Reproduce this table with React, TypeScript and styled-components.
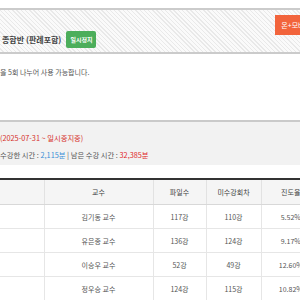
import styled, { createGlobalStyle } from "styled-components";

const GlobalStyle = createGlobalStyle`
  html, body {
    margin: 0;
    padding: 0;
    background: #ffffff;
    overflow: hidden;
  }
  body {
    font-family: "Noto Sans CJK KR", "Noto Sans", sans-serif;
    color: #555;
  }
`;

const rows = [
    { name: "김기동 교수", files: "117강", left: "110강", rate: "5.52%" },
    { name: "유은종 교수", files: "136강", left: "124강", rate: "9.17%" },
    { name: "이승우 교수", files: "52강", left: "49강", rate: "12.60%" },
    { name: "정우승 교수", files: "124강", left: "115강", rate: "10.82%" },
];

const App = () => {
    return (
        <Page>
            <GlobalStyle />
            <CourseHeader>
                <TitleGroup>
                    <Title>종합반 (판례포함)</Title>
                    <Badge>일시정지</Badge>
                </TitleGroup>
                <DeviceButton>온+모바일</DeviceButton>
            </CourseHeader>

            <Notice>을 5회 나누어 사용 가능합니다.</Notice>

            <StatusBox>
                <DateLine>(2025-07-31 ~ 일시중지중)</DateLine>
                <TimeLine>
                    수강한 시간 : <Blue>2,115분</Blue> | 남은 수강 시간 : <Red>32,385분</Red>
                </TimeLine>
            </StatusBox>

            <Table>
                <colgroup>
                    <col style={{width: 44}} />
                    <col style={{width: 109}} />
                    <col style={{width: 53}} />
                    <col style={{width: 55}} />
                    <col style={{width: 59}} />
                </colgroup>
                <thead>
                <tr>
                    <Th></Th>
                    <Th>교수</Th>
                    <Th>파일수</Th>
                    <Th>미수강회차</Th>
                    <Th>진도율</Th>
                </tr>
                </thead>
                <tbody>
                {rows.map((r) => (
                    <tr key={r.name}>
                        <Td></Td>
                        <Td>{r.name}</Td>
                        <Td>{r.files}</Td>
                        <Td>{r.left}</Td>
                        <Td>{r.rate}</Td>
                    </tr>
                ))}
                </tbody>
            </Table>
        </Page>
    );
};

const Page = styled.div`
  width: 320px;
  padding-top: 8px;
`;

const CourseHeader = styled.div`
  height: 42px;
  border-top: 2px solid #cbcbcb;
  border-bottom: 2px solid #cbcbcb;
  background: repeating-linear-gradient(45deg, #fafafa 0 2px, #e9e9e9 2px 3px);
  display: flex;
  justify-content: space-between;
  align-items: flex-start;
`;

const TitleGroup = styled.div`
  margin-top: 21px;
  height: 17px;
  display: flex;
  align-items: center;
  gap: 5px;
  padding-left: 2px;
`;

const Title = styled.span`
  font-size: 8px;
  font-weight: 700;
  color: #444;
  white-space: nowrap;
`;

const Badge = styled.span`
  height: 17px;
  padding: 0 4px;
  display: flex;
  align-items: center;
  background: #4cae5b;
  color: #ffffff;
  font-size: 6px;
  font-weight: 700;
  border-radius: 2px;
  white-space: nowrap;
`;

const DeviceButton = styled.div`
  margin-top: 5px;
  margin-right: 3px;
  height: 20px;
  padding: 0 6px;
  display: flex;
  align-items: center;
  background: #f2643c;
  color: #ffffff;
  font-size: 7px;
  white-space: nowrap;
`;

const Notice = styled.div`
  height: 66px;
  padding-top: 13px;
  box-sizing: border-box;
  font-size: 7px;
  color: #555;
  white-space: nowrap;
`;

const StatusBox = styled.div`
  height: 45px;
  border-top: 2px solid #cacaca;
  background: #f2f2f2;
  padding-top: 11px;
  box-sizing: border-box;
  display: flex;
  flex-direction: column;
  gap: 7px;
  font-size: 7.3px;
  white-space: nowrap;
  margin-bottom: 13px;
`;

const DateLine = styled.div`
  color: #d6312c;
`;

const TimeLine = styled.div`
  color: #555;
`;

const Blue = styled.span`
  color: #3a8fd6;
`;

const Red = styled.span`
  color: #e0282a;
`;

const Table = styled.table`
  width: 320px;
  border-collapse: collapse;
  table-layout: fixed;
  border-top: 2px solid #333;
  font-size: 7px;
  color: #555;
`;

const Th = styled.th`
  height: 24px;
  padding: 0;
  background: #f5f5f5;
  font-weight: 400;
  color: #444;
  border-bottom: 1px solid #d8d8d8;
  border-left: 1px solid #e2e2e2;
  &:first-child { border-left: none; }
`;

const Td = styled.td`
  height: 23px;
  padding: 0;
  text-align: center;
  border-bottom: 1px solid #e6e6e6;
  border-left: 1px solid #e6e6e6;
  &:first-child { border-left: none; }
`;

export default App;
